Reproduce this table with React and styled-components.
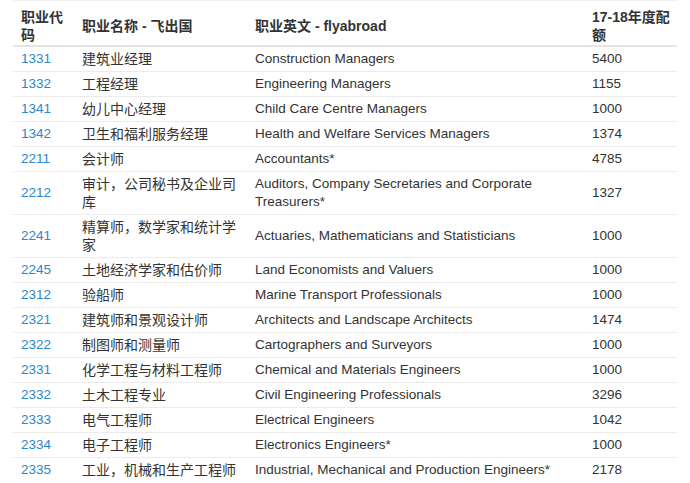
import React from "react";
import styled, { createGlobalStyle } from "styled-components";

const Global = createGlobalStyle`
  html, body { margin: 0; padding: 0; background: #fff; }
  body { font-family: "Liberation Sans", Arial, "Noto Sans CJK SC", sans-serif; color: #333; }
`;

const Wrap = styled.div`
  padding: 0 13px 0 13px;
`;

const Table = styled.table`
  width: 664px;
  border-collapse: collapse;
  table-layout: fixed;
  border-top: 1px solid #f1f1f1;
`;

const Th = styled.th`
  text-align: left;
  font-weight: bold;
  font-size: 14px;
  line-height: 18px;
  padding: 7px ${(p) => (p.$last ? "0" : "8px")} 1px 8px;
  vertical-align: middle;
  border-bottom: 2px solid #e4e4e4;
  color: #333;
  font-family: "Liberation Sans", Arial, "Noto Sans CJK SC", sans-serif;
`;

const Td = styled.td`
  font-size: ${(p) => (p.$latin ? "13.5px" : "14px")};
  line-height: 18px;
  padding: 3px 8px;
  vertical-align: middle;
  border-top: 1px solid #ebebeb;
  color: #333;
  font-family: "Liberation Sans", Arial, "Noto Sans CJK SC", sans-serif;
`;

const Code = styled.a`
  color: #2b86cb;
  text-decoration: none;
`;

const rows = [
  ["1331", "建筑业经理", "Construction Managers", "5400"],
  ["1332", "工程经理", "Engineering Managers", "1155"],
  ["1341", "幼儿中心经理", "Child Care Centre Managers", "1000"],
  ["1342", "卫生和福利服务经理", "Health and Welfare Services Managers", "1374"],
  ["2211", "会计师", "Accountants*", "4785"],
  ["2212", "审计，公司秘书及企业司库", "Auditors, Company Secretaries and Corporate Treasurers*", "1327"],
  ["2241", "精算师，数学家和统计学家", "Actuaries, Mathematicians and Statisticians", "1000"],
  ["2245", "土地经济学家和估价师", "Land Economists and Valuers", "1000"],
  ["2312", "验船师", "Marine Transport Professionals", "1000"],
  ["2321", "建筑师和景观设计师", "Architects and Landscape Architects", "1474"],
  ["2322", "制图师和测量师", "Cartographers and Surveyors", "1000"],
  ["2331", "化学工程与材料工程师", "Chemical and Materials Engineers", "1000"],
  ["2332", "土木工程专业", "Civil Engineering Professionals", "3296"],
  ["2333", "电气工程师", "Electrical Engineers", "1042"],
  ["2334", "电子工程师", "Electronics Engineers*", "1000"],
  ["2335", "工业，机械和生产工程师", "Industrial, Mechanical and Production Engineers*", "2178"],
];

export default function App() {
  return (
    <Wrap>
      <Global />
      <Table>
        <colgroup>
          <col style={{ width: 61 }} />
          <col style={{ width: 173 }} />
          <col style={{ width: 337 }} />
          <col style={{ width: 93 }} />
        </colgroup>
        <thead>
          <tr>
            <Th>职业代码</Th>
            <Th>职业名称 - 飞出国</Th>
            <Th>职业英文 - flyabroad</Th>
            <Th $last>17-18年度配额</Th>
          </tr>
        </thead>
        <tbody>
          {rows.map((r) => (
            <tr key={r[0]}>
              <Td $latin>
                <Code href="#">{r[0]}</Code>
              </Td>
              <Td>{r[1]}</Td>
              <Td $latin>{r[2]}</Td>
              <Td $latin>{r[3]}</Td>
            </tr>
          ))}
        </tbody>
      </Table>
    </Wrap>
  );
}
